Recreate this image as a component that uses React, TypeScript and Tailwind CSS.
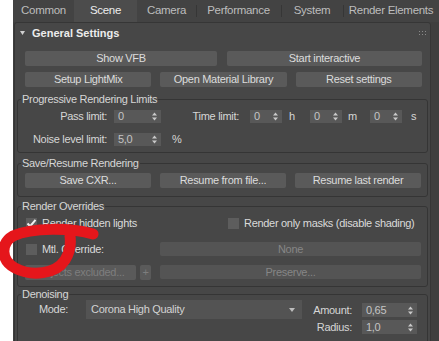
import React from 'react';

const tabs = [
  { label: 'Common', w: 'w-[61px]' },
  { label: 'Scene', w: 'w-[63px]', active: true },
  { label: 'Camera', w: 'w-[59px]' },
  { label: 'Performance', w: 'w-[85px]', sep: true },
  { label: 'System', w: 'w-[62px]', sep: true },
  { label: 'Render Elements', w: 'w-[96px]', sep: true },
];

const Arrows = () => (
  <svg width="5" height="9" viewBox="0 0 5 9" className="shrink-0">
    <path d="M2.5 0.5 L5 3.5 H0 Z M2.5 8.5 L5 5.5 H0 Z" fill="#c9c9c9" />
  </svg>
);

const Spinner = ({ value, className = '' }: { value: string; className?: string }) => (
  <div className={`h-[13px] bg-[#585858] flex items-center justify-between pl-[4px] pr-[4px] text-[#c4c4c4] ${className}`}>
    <span>{value}</span>
    <Arrows />
  </div>
);

const Btn = ({ children, className = '', dim = false }: { children: React.ReactNode; className?: string; dim?: boolean }) => (
  <div
    className={`h-[15px] rounded-[2px] bg-[#5a5a5a] flex items-center justify-center ${dim ? 'text-[#7e7e7e]' : 'text-[#dcdcdc]'} ${className}`}
  >
    {children}
  </div>
);

const Check = ({ checked = false }: { checked?: boolean }) => (
  <div className="w-[11px] h-[11px] bg-[#5d5d5d] shrink-0 flex items-center justify-center">
    {checked && (
      <svg width="11" height="11" viewBox="0 0 11 11">
        <path d="M1.5 5.5 L4.2 8.2 L9.5 1.8" stroke="#f0f0f0" strokeWidth="2" fill="none" />
      </svg>
    )}
  </div>
);

const Group = ({ title, children, className = '' }: { title: string; children: React.ReactNode; className?: string }) => (
  <fieldset className={`mx-[2px] border border-[#353535] rounded-[3px] ${className}`}>
    <legend className="ml-[3px] px-[1px] leading-[12px] text-[#d6d6d6]">{title}</legend>
    {children}
  </fieldset>
);

export default function App() {
  return (
    <div className="relative w-[439px] h-[341px] overflow-hidden bg-white flex font-['Liberation_Sans',Arial,sans-serif] text-[11px] tracking-[-0.3px] leading-none">
      <div className="w-[13px] shrink-0" />
      <div className="flex-1 flex flex-col bg-[#3f3f3f]">
        {/* tabs */}
        <div className="h-[22px] flex bg-[#434343] shrink-0 text-[11.5px]">
          {tabs.map((t) => (
            <div
              key={t.label}
              className={`relative flex items-center justify-center shrink-0 ${t.w} ${t.active ? 'bg-[#4c4c4c] text-[#ececec]' : 'text-[#bdbdbd]'}`}
            >
              {t.sep && <div className="absolute left-0 top-[5px] w-px h-[12px] bg-[#363636]" />}
              {t.label}
            </div>
          ))}
        </div>

        <div className="flex flex-1">
          <div className="ml-[1px] w-[417px] border border-[#363636] rounded-t-[3px] bg-[#474747] flex flex-col">
            {/* header */}
            <div className="h-[20px] flex items-center pl-[5px] pr-[4px] shrink-0">
              <svg width="5" height="4" viewBox="0 0 5 4">
                <path d="M0 0 H5 L2.5 4 Z" fill="#d0d0d0" />
              </svg>
              <span className="ml-[7px] font-bold text-[#ececec] tracking-[0px]">General Settings</span>
              <svg width="7" height="5" viewBox="0 0 7 5" className="ml-auto">
                {[0, 3, 6].map((x) => (
                  <React.Fragment key={x}>
                    <rect x={x} y={0} width="1" height="1" fill="#8a8a8a" />
                    <rect x={x} y={3} width="1" height="1" fill="#8a8a8a" />
                  </React.Fragment>
                ))}
              </svg>
            </div>

            <div className="pl-[10px] pr-[8px] pt-[8px] flex flex-col gap-[6px]">
              <div className="grid grid-cols-[192px_1fr] gap-[10px]">
                <Btn>Show VFB</Btn>
                <Btn>Start interactive</Btn>
              </div>
              <div className="grid grid-cols-3 gap-[9px]">
                <Btn>Setup LightMix</Btn>
                <Btn>Open Material Library</Btn>
                <Btn>Reset settings</Btn>
              </div>
            </div>

            <Group title="Progressive Rendering Limits" className="mt-[6px] pb-[6px]">
              <div className="mt-[5px] flex items-center h-[13px] text-[#d6d6d6]">
                <div className="w-[89px] text-right">Pass limit:</div>
                <Spinner value="0" className="ml-[7px] w-[47px]" />
                <div className="w-[89px] text-right pr-[11px]">Time limit:</div>
                <Spinner value="0" className="w-[32px]" />
                <div className="w-[28px] pl-[7px]">h</div>
                <Spinner value="0" className="w-[32px]" />
                <div className="w-[28px] pl-[6px]">m</div>
                <Spinner value="0" className="w-[32px]" />
                <div className="pl-[9px]">s</div>
              </div>
              <div className="mt-[10px] flex items-center h-[13px] text-[#d6d6d6]">
                <div className="w-[89px] text-right">Noise level limit:</div>
                <Spinner value="5,0" className="ml-[7px] w-[47px]" />
                <div className="pl-[11px]">%</div>
              </div>
            </Group>

            <Group title="Save/Resume Rendering" className="mt-[4px] pb-[8px]">
              <div className="mt-[4px] pl-[7px] pr-[6px] grid grid-cols-3 gap-[9px]">
                <Btn>Save CXR...</Btn>
                <Btn>Resume from file...</Btn>
                <Btn>Resume last render</Btn>
              </div>
            </Group>

            <Group title="Render Overrides" className="mt-[3px] pb-[7px]">
              <div className="mt-[5px] pl-[8px] flex items-center h-[12px] text-[#dadada]">
                <div className="w-[202px] flex items-center">
                  <Check checked />
                  <span className="ml-[5px]">Render hidden lights</span>
                </div>
                <Check />
                <span className="ml-[5px]">Render only masks (disable shading)</span>
              </div>
              <div className="mt-[13px] pl-[7px] pr-[6px] flex items-center h-[14px]">
                <div className="w-[135px] flex items-center pl-[1px] text-[#dadada]">
                  <Check />
                  <span className="ml-[5px]">Mtl. Override:</span>
                </div>
                <div className="flex-1 h-[14px] rounded-[2px] bg-[#545454] flex items-center justify-center text-[#868686]">None</div>
              </div>
              <div className="mt-[9px] pl-[7px] pr-[6px] flex items-center h-[14px]">
                <Btn dim className="w-[111px] h-[14px]">Objects excluded...</Btn>
                <Btn dim className="ml-[4px] w-[11px] h-[14px]">+</Btn>
                <div className="ml-[9px] flex-1 h-[14px] rounded-[2px] bg-[#545454] flex items-center justify-center text-[#868686]">Preserve...</div>
              </div>
            </Group>

            <Group title="Denoising" className="mt-[1px] pb-[10px]">
              <div className="flex items-start text-[#d6d6d6]">
                <div className="w-[68px] h-[19px] flex items-center justify-end pr-[18px]">Mode:</div>
                <div className="w-[216px] h-[19px] bg-[#535353] flex items-center pl-[5px] pr-[7px] text-[#d2d2d2]">
                  <span>Corona High Quality</span>
                  <svg width="6" height="4" viewBox="0 0 6 4" className="ml-auto">
                    <path d="M0 0 H6 L3 4 Z" fill="#bdbdbd" />
                  </svg>
                </div>
                <div className="flex flex-col gap-[3px] mt-[3px]">
                  <div className="flex items-center h-[14px]">
                    <div className="w-[53px] text-right pr-[3px]">Amount:</div>
                    <Spinner value="0,65" className="ml-[7px] w-[55px] h-[14px]" />
                  </div>
                  <div className="flex items-center h-[14px]">
                    <div className="w-[53px] text-right pr-[3px]">Radius:</div>
                    <Spinner value="1,0" className="ml-[7px] w-[55px] h-[14px]" />
                  </div>
                </div>
              </div>
            </Group>
          </div>
        </div>
      </div>

      {/* red marker annotation */}
      <svg className="absolute left-0 top-0 pointer-events-none" width="439" height="341" viewBox="0 0 439 341">
        <path
          d="M93 234 C72 228, 32 227, 13 236 C1 243, 0 260, 15 268 C32 277, 56 274, 65 260 C70 252, 71 243, 70 236"
          stroke="#e5161b"
          strokeWidth="11"
          fill="none"
          strokeLinecap="round"
          strokeLinejoin="round"
        />
      </svg>
    </div>
  );
}
